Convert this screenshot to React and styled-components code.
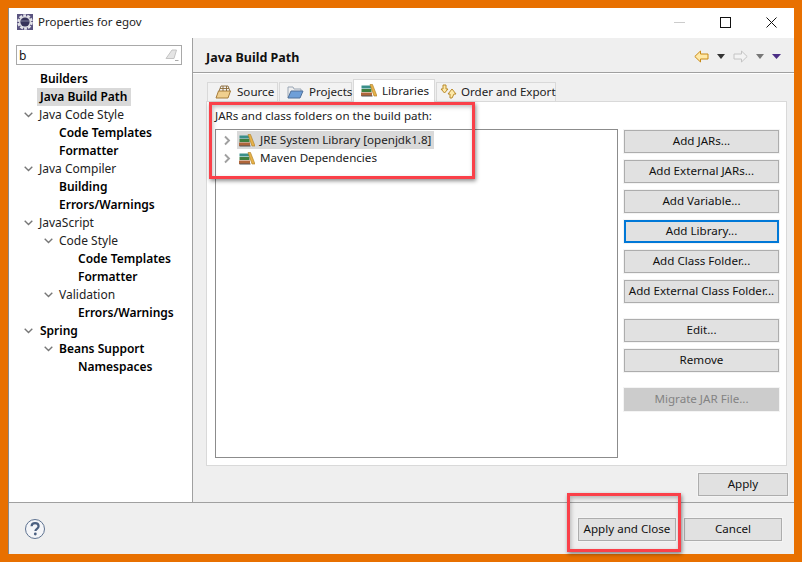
import React from 'react';
import styled, { createGlobalStyle } from 'styled-components';

const Global = createGlobalStyle`
  html, body { margin: 0; padding: 0; background: #e87000; }
  body { width: 802px; height: 562px; overflow: hidden; font-family: "Noto Sans", "Open Sans", sans-serif; font-size: 11.6px; color: #111; }
`;
const Stage = styled.div`position: relative; width: 802px; height: 562px; padding: 8px 8px 8px 8px; box-sizing: border-box;`;
const Win = styled.div`width: 786px; height: 546px; background: #fff; border-left: 1px solid #8a8a8a; box-sizing: border-box; display: flex; flex-direction: column;`;
const TitleBar = styled.div`height: 30px; box-sizing: border-box; padding: 0 0 2px 8px; display: flex; align-items: center; flex: none;`;
const TitleText = styled.span`margin-left: 5px; font-size: 11.5px; color: #222; flex: 1; line-height: 16px;`;
const WinBtn = styled.div`width: 46px; height: 28px; display: flex; align-items: center; justify-content: center;`;
const Body = styled.div`flex: 1; display: flex; min-height: 0;`;
const Side = styled.div`width: 183px; flex: none; border-right: 1px solid #a0a0a0; background: #fff; box-sizing: content-box; padding-top: 7px;`;
const Search = styled.div`margin-left: 7px; width: 166px; height: 20px; box-sizing: border-box; border: 1px solid #a9a9a9; display: flex; align-items: center; justify-content: space-between; padding: 0 2px 0 2px; font-size: 12px; margin-bottom: 5px;`;
const TreeRow = styled.div`height: 18px; display: flex; align-items: center; padding-left: ${p => p.$x}px; position: relative; font-size: 12px; font-weight: ${p => p.$b ? 600 : 400}; line-height: 18px; white-space: nowrap; color: ${p => p.$b ? '#000' : '#222'};`;
const Selected = styled.span`background: #d9d9d9; padding: 0 4px 0 3px; margin-left: -3px;`;
const Arrow = styled.svg`position: absolute; top: 6px; left: ${p => p.$x}px;`;
const Right = styled.div`flex: 1; background: #efefef; display: flex; flex-direction: column; min-width: 0;`;
const Header = styled.div`height: 35px; flex: none; box-sizing: border-box; border-bottom: 1px solid #a0a0a0; display: flex; align-items: center; justify-content: space-between; padding: 4px 13px 0 13px; box-shadow: 0 1px 0 #fff;`;
const HeaderTitle = styled.span`font-weight: 700; font-size: 12.5px; color: #111;`;
const Nav = styled.div`display: flex; align-items: center; gap: 8px; margin-top: -1px;`;
const Tabs = styled.div`display: flex; align-items: flex-end; margin: 6px 0 0 14px; height: 23px; flex: none; position: relative; z-index: 1; gap: 1px;`;
const Tab = styled.div`height: ${p => p.$on ? 23 : 20}px; width: ${p => p.$w}px; box-sizing: border-box; display: flex; align-items: center; padding: 0 0 ${p => p.$on ? 2 : 1}px ${p => p.$pad || 7}px; gap: ${p => p.$gap || 5}px; background: ${p => p.$on ? '#fff' : '#f2f2f2'}; border: 1px solid #d9d9d9; border-bottom: ${p => p.$on ? 'none' : '1px solid #d9d9d9'}; color: #222; white-space: nowrap; svg { flex: none; }`;
const Panel = styled.div`height: 365px; margin: -1px 7px 0 13px; background: #fff; border: 1px solid #d9d9d9; box-sizing: border-box; padding: 5px 8px 7px 8px; display: flex; flex-direction: column; flex: none;`;
const PanelLabel = styled.div`height: 22px; line-height: 16px; padding-top: 1px; box-sizing: border-box; color: #222;`;
const PanelBody = styled.div`flex: 1; display: flex; min-height: 0; gap: 6px;`;
const ListBox = styled.div`width: 403px; flex: none; box-sizing: border-box; border: 1px solid #8c8c8c; padding-top: 1px; height: 329px;`;
const LibRow = styled.div`height: 18px; display: flex; align-items: center; padding-left: 7px; color: #222;`;
const LibSel = styled.span`display: flex; align-items: center; gap: 5px; height: 18px; box-sizing: border-box; padding: 0 3px 2px 2px; background: ${p => p.$on ? '#d9d9d9' : 'transparent'}; white-space: nowrap; margin-left: 6px; svg { position: relative; top: 1px; }`;
const Buttons = styled.div`display: flex; flex-direction: column; gap: 7px; padding-top: 1px;`;
const Btn = styled.div`width: ${p => p.$w || 155}px; height: 23px; flex: none; box-sizing: border-box; display: flex; align-items: center; justify-content: center; white-space: nowrap; padding-bottom: 2px; background: ${p => p.$off ? '#cccccc' : '#e1e1e1'}; border: ${p => p.$focus ? '2px solid #0078d7' : p.$off ? '1px solid #cccccc' : '1px solid #adadad'}; color: ${p => p.$off ? '#838383' : '#111'}; box-shadow: 0 0 0 1px #f4f4f4; margin-top: ${p => p.$gap || 0}px;`;
const ApplyRow = styled.div`display: flex; justify-content: flex-end; padding: 7px 6px 0 0; flex: none;`;
const Footer = styled.div`height: 52px; flex: none; background: #efefef; border-top: 1px solid #a0a0a0; box-sizing: border-box; display: flex; align-items: center; justify-content: space-between; padding: 0 12px 0 15px;`;
const FootBtns = styled.div`display: flex; gap: 8px; margin-top: 2px;`;
const Mark = styled.div`position: absolute; left: ${p => p.$x}px; top: ${p => p.$y}px; width: ${p => p.$w}px; height: ${p => p.$h}px; box-sizing: border-box; border: 3px solid #fa4049; box-shadow: 1px 2px 4px rgba(0,0,0,.45), inset 1px 2px 4px rgba(0,0,0,.25); z-index: 5; pointer-events: none;`;

const Chev = ({ x }) => (
  <Arrow $x={x} width="9" height="6" viewBox="0 0 9 6"><path d="M.7.7l3.8 3.8L8.3.7" fill="none" stroke="#777" strokeWidth="1.4" /></Arrow>
);
const Books = () => (
  <svg width="16" height="13" viewBox="0 0 16 13" style={{ flex: 'none' }}>
    <rect x="0.5" y="1.5" width="10" height="3" fill="#3a8f8a" />
    <rect x="0.5" y="5" width="10" height="3" fill="#3f7f3f" />
    <rect x="0" y="8.5" width="11" height="3.5" fill="#b0663a" />
    <path d="M9 0.5h2.5L16 12h-3z" fill="#e7b24a" stroke="#a97a20" strokeWidth=".6" />
    <rect x="0.5" y="11.5" width="11" height="1" fill="#555" />
  </svg>
);
const Right1 = () => (
  <svg width="8" height="11" viewBox="0 0 8 11" style={{ flex: 'none' }}><path d="M2 1.5l4 4-4 4" fill="none" stroke="#a0a0a0" strokeWidth="1.9" /></svg>
);
const Down = ({ c = '#333', w = 8 }) => (
  <svg width={w} height="5" viewBox={`0 0 ${w} 5`}><path d={`M0 0h${w}L${w / 2} 5z`} fill={c} /></svg>
);
const NavArrow = ({ left, fill, stroke }) => (
  <svg width="15" height="13" viewBox="0 0 15 13" style={left ? undefined : { transform: 'scaleX(-1)' }}>
    <path d="M.8 6.5L6.5 1v3h7.5v5H6.5v3z" fill={fill} stroke={stroke} strokeWidth="1" />
  </svg>
);

const tree = [
  ['Builders', 31, 1], ['Java Build Path', 31, 1, 0, 1],
  ['Java Code Style', 30, 0, 15], ['Code Templates', 50, 1], ['Formatter', 50, 1],
  ['Java Compiler', 30, 0, 15], ['Building', 50, 1], ['Errors/Warnings', 50, 1],
  ['JavaScript', 30, 0, 15], ['Code Style', 50, 0, 35], ['Code Templates', 69, 1], ['Formatter', 69, 1],
  ['Validation', 50, 0, 35], ['Errors/Warnings', 69, 1],
  ['Spring', 31, 1, 15], ['Beans Support', 50, 1, 35], ['Namespaces', 69, 1],
];

export default function App() {
  return (
    <Stage>
      <Global />
      <Win>
        <TitleBar>
          <svg width="16" height="16" viewBox="0 0 16 16" style={{ flex: 'none' }}>
            <rect width="16" height="16" fill="#5a5480" />
            <circle cx="8" cy="8" r="6" fill="none" stroke="#e4e4ea" strokeWidth="3.6" strokeDasharray="2.6 1.1" />
            <circle cx="8" cy="8" r="6" fill="#dcdce2" />
            <circle cx="8" cy="8" r="4.6" fill="#35325a" />
            <path d="M3.6 7h8.8" stroke="#8f8fa8" strokeWidth=".8" />
          </svg>
          <TitleText>Properties for egov</TitleText>
          <WinBtn><svg width="11" height="1"><rect width="11" height="1" fill="#ccc" /></svg></WinBtn>
          <WinBtn><svg width="11" height="11"><rect x=".5" y=".5" width="10" height="10" fill="none" stroke="#111" /></svg></WinBtn>
          <WinBtn><svg width="11" height="11"><path d="M.5.5l10 10M10.5.5l-10 10" stroke="#111" /></svg></WinBtn>
        </TitleBar>
        <Body>
          <Side>
            <Search>
              <span>b</span>
              <svg width="14" height="14" viewBox="0 0 14 14"><path d="M1 10.5L7 2h4.5L9 10.5z" fill="#e4e4e4" stroke="#c4c4c4" /><path d="M10 12.5h3.5" stroke="#aaa" /></svg>
            </Search>
            {tree.map(([t, x, b, a, s], i) => (
              <TreeRow key={i} $x={x} $b={b}>
                {a ? <Chev x={a} /> : null}
                {s ? <Selected>{t}</Selected> : t}
              </TreeRow>
            ))}
          </Side>
          <Right>
            <Header>
              <HeaderTitle>Java Build Path</HeaderTitle>
              <Nav>
                <NavArrow left fill="#ffe9a8" stroke="#c98a17" />
                <Down />
                <NavArrow fill="#f3f3f3" stroke="#c4c4c4" />
                <Down c="#777" />
                <Down c="#4b2e86" w="9" />
              </Nav>
            </Header>
            <Tabs>
              <Tab $w={71}>
                <svg width="17" height="14" viewBox="0 0 17 14"><path d="M1 13L3.5 6h12L13 13z" fill="#f0cf8e" stroke="#a67c3a" /><path d="M4 6l2-5h7l2 5M8 1v5M11.5 1v5M5 3.5h9" fill="none" stroke="#8a6a38" strokeWidth=".9" /></svg>
                Source
              </Tab>
              <Tab $w={73}>
                <svg width="17" height="14" viewBox="0 0 17 14"><path d="M1 13V2h5l1 2h7v2" fill="#eee" stroke="#9aa6b5" /><path d="M1 13l3-7h12l-3 7z" fill="#6e9fd8" stroke="#50719a" /></svg>
                Projects
              </Tab>
              <Tab $w={82} $on><Books />Libraries</Tab>
              <Tab $w={120} $pad={3} $gap={4}>
                <svg width="17" height="15" viewBox="0 0 17 15"><path d="M3 1h3v4h2L4.5 9 1 5h2z" fill="#fde9a8" stroke="#b98a2b" /><path d="M12 14h-2V10H8l4-5 4 5h-2z" fill="#fde9a8" stroke="#b98a2b" /></svg>
                Order and Export
              </Tab>
            </Tabs>
            <Panel>
              <PanelLabel>JARs and class folders on the build path:</PanelLabel>
              <PanelBody>
                <ListBox>
                  <LibRow><Right1 /><LibSel $on><Books />JRE System Library [openjdk1.8]</LibSel></LibRow>
                  <LibRow><Right1 /><LibSel><Books />Maven Dependencies</LibSel></LibRow>
                </ListBox>
                <Buttons>
                  <Btn>Add JARs...</Btn>
                  <Btn>Add External JARs...</Btn>
                  <Btn>Add Variable...</Btn>
                  <Btn $focus>Add Library...</Btn>
                  <Btn>Add Class Folder...</Btn>
                  <Btn>Add External Class Folder...</Btn>
                  <Btn $gap={9}>Edit...</Btn>
                  <Btn>Remove</Btn>
                  <Btn $gap={9} $off>Migrate JAR File...</Btn>
                </Buttons>
              </PanelBody>
            </Panel>
            <ApplyRow><Btn $w={90}>Apply</Btn></ApplyRow>
          </Right>
        </Body>
        <Footer>
          <svg width="22" height="22" viewBox="0 0 22 22">
            <circle cx="11" cy="11" r="9.5" fill="#f4f5f8" stroke="#5f7391" strokeWidth="1" />
            <path d="M7.6 8.3c0-4.2 7-4.2 7 0 0 2.7-3.2 2.4-3.2 4.8" fill="none" stroke="#4a5f80" strokeWidth="2.2" />
            <circle cx="11.3" cy="16" r="1.4" fill="#4a5f80" />
          </svg>
          <FootBtns>
            <Btn $w={98}>Apply and Close</Btn>
            <Btn $w={98}>Cancel</Btn>
          </FootBtns>
        </Footer>
      </Win>
      <Mark $x={209} $y={102} $w={266} $h={77} />
      <Mark $x={567} $y={493} $w={114} $h={59} />
    </Stage>
  );
}
